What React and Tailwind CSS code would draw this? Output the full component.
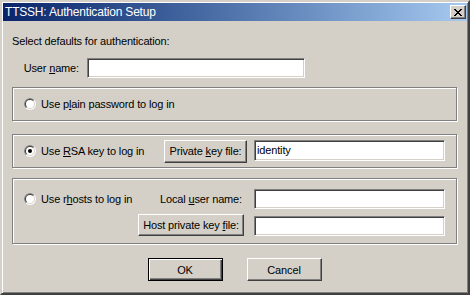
import React from "react";

const FONT = "font-['Liberation_Sans',Arial,sans-serif]";
const BTN =
  "flex items-center justify-center bg-[#d4d0c8] border border-t-white border-l-white border-r-[#404040] border-b-[#404040] shadow-[inset_-1px_-1px_#808080]";
const INPUT =
  "bg-white border border-t-[#808080] border-l-[#808080] border-r-white border-b-white shadow-[inset_1px_1px_#404040,inset_-1px_-1px_#d4d0c8] flex items-center pl-[2px]";
const GROUP =
  "border border-[#808080] shadow-[inset_1px_1px_#fff,1px_1px_#fff]";

function Radio({ checked }) {
  return (
    <svg width="12" height="12" viewBox="0 0 12 12" className="shrink-0">
      <circle cx="6" cy="6" r="6" fill="#fff" />
      <path d="M1.757 10.243A6 6 0 0 1 10.243 1.757Z" fill="#808080" />
      <circle cx="6" cy="6" r="5" fill="#d4d0c8" />
      <path d="M2.464 9.536A5 5 0 0 1 9.536 2.464Z" fill="#404040" />
      <circle cx="6" cy="6" r="4" fill="#fff" />
      {checked && <circle cx="6" cy="6" r="2" fill="#000" />}
    </svg>
  );
}

function CloseGlyph() {
  return (
    <svg width="8" height="7" viewBox="0 0 8 7" shapeRendering="crispEdges">
      <path
        fill="#000"
        d="M0 0h2v1h-2z M6 0h2v1h-2z M1 1h2v1h-2z M5 1h2v1h-2z M2 2h4v1h-4z M3 3h2v1h-2z M2 4h4v1h-4z M1 5h2v1h-2z M5 5h2v1h-2z M0 6h2v1h-2z M6 6h2v1h-2z"
      />
    </svg>
  );
}

export default function App() {
  return (
    <div
      className={`${FONT} text-[11px] tracking-[-0.15px] leading-[14px] whitespace-nowrap text-black w-[470px] h-[295px] bg-[#d4d0c8] border-2 border-t-[#d4d0c8] border-l-[#d4d0c8] border-r-[#404040] border-b-[#404040] shadow-[inset_1px_1px_#fff,inset_-1px_-1px_#808080] p-px flex flex-col overflow-hidden`}
    >
      {/* Title bar */}
      <div className="h-[18px] shrink-0 flex items-center bg-gradient-to-r from-[#0a246a] to-[#a6caf0] pl-[2px] pr-[1px]">
        <span className="text-white text-[12px] tracking-[-0.2px]">TTSSH: Authentication Setup</span>
        <div className={`${BTN} ml-auto w-[16px] h-[14px]`}>
          <CloseGlyph />
        </div>
      </div>

      {/* Body */}
      <div className="flex flex-col pl-[9px] pr-[10px]">
        <div className="mt-[13px] h-[14px]">Select defaults for authentication:</div>

        <div className="mt-[10px] flex items-center h-[20px]">
          <div className="w-[68px] text-right pr-[1px]">
            User <u>n</u>ame:
          </div>
          <div className={`${INPUT} ml-[7px] w-[218px] h-[20px]`} />
        </div>

        {/* Group 1 */}
        <div className={`${GROUP} mt-[9px] h-[34px] flex items-center pl-[11px]`}>
          <Radio />
          <span className="ml-[5px]">
            Use p<u>l</u>ain password to log in
          </span>
        </div>

        {/* Group 2 */}
        <div className={`${GROUP} mt-[13px] h-[34px] flex items-center pl-[11px]`}>
          <div className="w-[140px] flex items-center">
            <Radio checked />
            <span className="ml-[5px]">
              Use <u>R</u>SA key to log in
            </span>
          </div>
          <div className={`${BTN} w-[83px] h-[23px]`}>
            <span>
              Private <u>k</u>ey file:
            </span>
          </div>
          <div className={`${INPUT} ml-[7px] w-[191px] h-[21px] -mt-[2px]`}>
            <span>identity</span>
          </div>
        </div>

        {/* Group 3 */}
        <div className={`${GROUP} mt-[10px] h-[66px] flex flex-col pl-[11px] pt-[10px]`}>
          <div className="flex items-center h-[20px]">
            <div className="w-[219px] flex items-center">
              <Radio />
              <span className="ml-[5px]">
                Use r<u>h</u>osts to log in
              </span>
              <span className="ml-auto pr-[1px]">
                Local <u>u</u>ser name:
              </span>
            </div>
            <div className={`${INPUT} ml-[11px] w-[191px] h-[20px]`} />
          </div>
          <div className="flex items-end mt-[5px]">
            <div className="w-[114px]" />
            <div className={`${BTN} w-[106px] h-[22px]`}>
              <span>
                Host private key <u>f</u>ile:
              </span>
            </div>
            <div className={`${INPUT} ml-[10px] w-[191px] h-[20px]`} />
          </div>
        </div>

        {/* Buttons */}
        <div className="mt-[14px] flex justify-center gap-[24px]">
          <div className="w-[75px] h-[23px] flex items-center justify-center bg-[#d4d0c8] border border-black shadow-[inset_1px_1px_#fff,inset_-1px_-1px_#404040,inset_-2px_-2px_#808080]">
            <span>OK</span>
          </div>
          <div className={`${BTN} w-[75px] h-[23px]`}>
            <span>Cancel</span>
          </div>
        </div>
      </div>
    </div>
  );
}
